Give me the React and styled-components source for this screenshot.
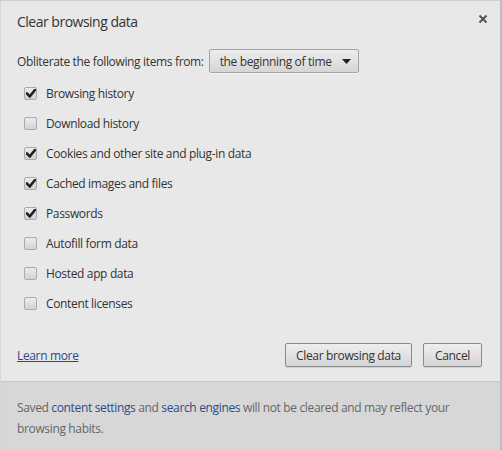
import React from "react";
import styled, { createGlobalStyle } from "styled-components";

const Global = createGlobalStyle`
  html, body { margin: 0; padding: 0; background: #e8e8e8; }
  body { font-family: "Open Sans", "Noto Sans", sans-serif; font-size: 12px; color: #333; }
`;

const Dialog = styled.div`
  width: 502px;
  height: 450px;
  box-sizing: border-box;
  display: flex;
  flex-direction: column;
  background: #e8e8e8;
  border-top: 1px solid #cfcfcf;
  border-left: 1px solid #d6d6d6;
  border-right: 2px solid #bdbdbd;
`;

const Header = styled.div`
  display: flex;
  align-items: center;
  justify-content: space-between;
  height: 40px;
  padding: 0 10px 0 16px;
  box-sizing: border-box;
`;

const Title = styled.div`
  font-size: 14px;
  color: #333;
  letter-spacing: -0.5px;
`;

const Close = styled.button`
  width: 14px;
  height: 14px;
  padding: 0;
  border: none;
  background: none;
  display: flex;
  align-items: center;
  justify-content: center;
  margin-top: -5px;
`;

const Body = styled.div`
  flex: 1;
  display: flex;
  flex-direction: column;
  padding: 8px 16px 0 16px;
`;

const TimeRow = styled.div`
  display: flex;
  align-items: center;
  gap: 5px;
  height: 24px;
  letter-spacing: -0.35px;
`;

const Select = styled.div`
  display: flex;
  align-items: center;
  justify-content: space-between;
  width: 150px;
  height: 24px;
  box-sizing: border-box;
  padding: 0 7px 0 10px;
  border: 1px solid #a3a3a3;
  border-radius: 2px;
  background: linear-gradient(#ededed, #d6d6d6);
  box-shadow: 0 1px 0 rgba(255,255,255,0.6);
  color: #333;
`;

const List = styled.div`
  display: flex;
  flex-direction: column;
  padding: 5px 0 0 7px;
`;

const Row = styled.label`
  display: flex;
  align-items: center;
  gap: 9px;
  height: 30px;
  letter-spacing: -0.35px;
`;

const Box = styled.span`
  width: 13px;
  height: 13px;
  box-sizing: border-box;
  border: 1px solid #aaaaaa;
  border-radius: 2px;
  background: linear-gradient(#ececec, #d2d2d2);
  display: flex;
  align-items: center;
  justify-content: center;
`;

const Actions = styled.div`
  margin-top: auto;
  display: flex;
  align-items: center;
  height: 24px;
  margin-bottom: 14px;
  padding-right: 2px;
`;

const Link = styled.a`
  color: #2b4a88;
  text-decoration: underline;
  letter-spacing: -0.35px;
  margin-right: auto;
`;

const Button = styled.button`
  height: 24px;
  padding: 0;
  width: ${(p) => p.$w}px;
  margin-left: ${(p) => p.$ml || 0}px;
  box-sizing: border-box;
  border: 1px solid #8c8c8c;
  border-radius: 2px;
  background: linear-gradient(#eeeeee, #d6d6d6);
  box-shadow: 0 1px 1px rgba(0,0,0,0.12);
  font-family: inherit;
  font-size: 12px;
  letter-spacing: -0.35px;
  color: #333;
`;

const Footer = styled.div`
  height: 69px;
  box-sizing: border-box;
  border-top: 1px solid #c9c9c9;
  background: #d7d7d7;
  padding: 15px 16px 0 16px;
  line-height: 21px;
  color: #666;
  letter-spacing: -0.35px;
`;

const FLink = styled.span`
  color: #2b4a88;
`;

const Check = () => (
  <svg width="10" height="9" viewBox="0 0 10 9">
    <path d="M1 4.6 L3.8 7.4 L9 1" fill="none" stroke="#222" strokeWidth="2.6" strokeLinecap="square" />
  </svg>
);

const items = [
  ["Browsing history", true],
  ["Download history", false],
  ["Cookies and other site and plug-in data", true],
  ["Cached images and files", true],
  ["Passwords", true],
  ["Autofill form data", false],
  ["Hosted app data", false],
  ["Content licenses", false],
];

export default function App() {
  return (
    <>
      <Global />
      <Dialog>
        <Header>
          <Title>Clear browsing data</Title>
          <Close aria-label="Close">
            <svg width="10" height="10" viewBox="0 0 10 10">
              <path d="M1.5 1.5 L8.5 8.5 M8.5 1.5 L1.5 8.5" stroke="#555" strokeWidth="2" />
            </svg>
          </Close>
        </Header>
        <Body>
          <TimeRow>
            <span>Obliterate the following items from:</span>
            <Select>
              <span>the beginning of time</span>
              <svg width="9" height="5" viewBox="0 0 9 5">
                <path d="M0 0 L9 0 L4.5 5 Z" fill="#222" />
              </svg>
            </Select>
          </TimeRow>
          <List>
            {items.map(([label, on]) => (
              <Row key={label}>
                <Box>{on && <Check />}</Box>
                <span>{label}</span>
              </Row>
            ))}
          </List>
          <Actions>
            <Link href="#">Learn more</Link>
            <Button $w={127}>Clear browsing data</Button>
            <Button $w={59} $ml={11}>Cancel</Button>
          </Actions>
        </Body>
        <Footer>
          Saved <FLink>content settings</FLink> and <FLink>search engines</FLink> will not be cleared and may reflect your
          <br />
          browsing habits.
        </Footer>
      </Dialog>
    </>
  );
}
